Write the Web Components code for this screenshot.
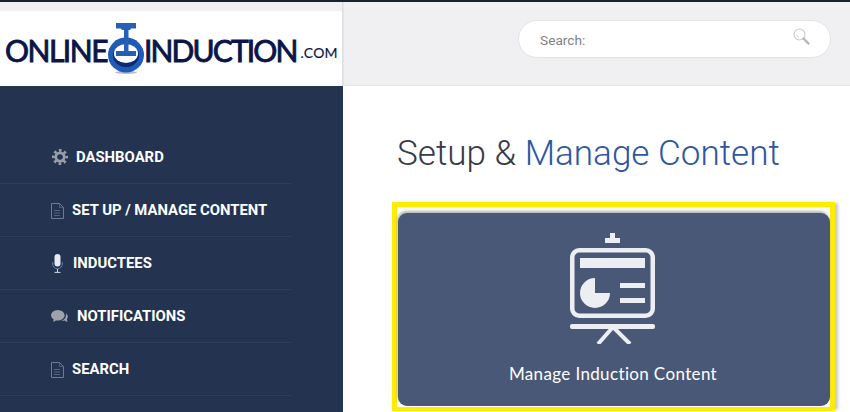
<!DOCTYPE html>
<html><head><meta charset="utf-8"><style>
html,body{margin:0;padding:0;height:412px;overflow:hidden;background:#fff;font-family:Roboto,sans-serif}
</style></head><body>
<oi-app>
<oi-logo slot="logo"></oi-logo>
<oi-search slot="search"></oi-search>
<oi-nav-item slot="nav" icon="gear" gap="8">DASHBOARD</oi-nav-item>
<oi-nav-item slot="nav" icon="doc" gap="8">SET UP / MANAGE CONTENT</oi-nav-item>
<oi-nav-item slot="nav" icon="mic" gap="10">INDUCTEES</oi-nav-item>
<oi-nav-item slot="nav" icon="chat" gap="8">NOTIFICATIONS</oi-nav-item>
<oi-nav-item slot="nav" icon="doc" gap="8">SEARCH</oi-nav-item>
<oi-card slot="main">Manage Induction Content</oi-card>
</oi-app>
<script>
const def=(n,html)=>customElements.define(n,class extends HTMLElement{constructor(){super();this.attachShadow({mode:'open'}).innerHTML=html}});
def('oi-app',`<style>
:host{display:grid;grid-template-columns:343px 1fr;grid-template-rows:2px 84px 326px;width:850px;height:412px;overflow:hidden}
.top{grid-column:1/3;background:#17222e}
.logo{background:#f0f0f2;padding-top:9px;border-right:1px solid #dedee0;box-sizing:border-box;display:flex;flex-direction:column}
.hdr{background:#f0f0f2;border-left:1px solid #e6e6e8;border-bottom:1px solid #e6e6e8;display:flex;justify-content:flex-end;padding:18px 19px 0 0;box-sizing:border-box}
.side{background:#243350;padding-top:45px;box-sizing:border-box}
.side ::slotted(*){width:291px}
.main{padding:43px 15px 0 49px;box-sizing:border-box;display:flex;flex-direction:column}
h1{margin:0 0 25px 5px;font:300 35.1px/48px Roboto,sans-serif;color:#3a3a44;white-space:nowrap}
h1 span{color:#2f56a0}
</style>
<div class="top"></div>
<div class="logo"><slot name="logo"></slot></div>
<div class="hdr"><slot name="search"></slot></div>
<div class="side"><slot name="nav"></slot></div>
<div class="main"><h1>Setup &amp; <span>Manage Content</span></h1><slot name="main"></slot></div>`);
def('oi-logo',`<style>
:host{display:block;background:#fff;height:75px;box-sizing:border-box;padding:0 0 0 5px;flex:none}
.row{display:flex;align-items:center;height:75px;color:#0b1548;font:400 30px/1 "Lato",sans-serif;white-space:nowrap;-webkit-text-stroke:.9px #0b1548}
.a{letter-spacing:-1.5px;margin-top:2px}
.b{letter-spacing:-1.85px}
svg{flex:none;margin:-1px 0 0 1px}
small{font-size:14px;-webkit-text-stroke:.15px #0b1548;margin:9px 0 0 4px;letter-spacing:.2px}
</style><div class="row"><span class="a">ONLINE</span><svg width="36" height="51" viewBox="0 0 36 51"><ellipse cx="18" cy="49.500" rx="11" ry="1.500" fill="#b9bcc6"/><path d="M8 0h20v5.500h-5l-1 1.500h-8l-1-1.500H8z" fill="#2560b6"/><ellipse cx="18" cy="32" rx="18" ry="17.500" fill="#1f5bb8"/><ellipse cx="18" cy="32.500" rx="13" ry="11.500" fill="#0e2b72"/><ellipse cx="18" cy="30.500" rx="12" ry="9.500" fill="#fff"/><rect x="16" y="6" width="4.500" height="24" fill="#2560b6"/><path d="M8 28h20v5H8z" fill="#2560b6"/></svg><span class="a b">INDUCTION</span><small>.COM</small></div>`);
def('oi-search',`<style>
:host{display:flex;align-items:center;justify-content:space-between;width:313px;height:38px;box-sizing:border-box;background:#fff;border:1px solid #e4e4e6;border-radius:19px;padding:2px 20px 0 21px;font:13.7px Roboto,sans-serif;color:#808086}
svg{margin-top:-8px}
</style><span>Search:</span><svg width="17" height="17" viewBox="0 0 17 17"><circle cx="6.500" cy="6.500" r="5.500" fill="none" stroke="#c9cacd" stroke-width="1.100"/><path d="M3.600 7a3 3 0 0 0 2 2.200" fill="none" stroke="#c9cacd" stroke-width=".8"/><path d="M10.500 10.500l5 5" stroke="#b0b1b5" stroke-width="2.200" stroke-linecap="round"/></svg>`);
const icons={
gear:`<svg width="16" height="16" viewBox="0 0 16 16" style="margin-left:1px"><g fill="none" stroke="#9a9ea8"><circle cx="8" cy="8" r="6.600" stroke-width="2.800" stroke-dasharray="2.600 2.584" stroke-dashoffset="1.300"/><circle cx="8" cy="8" r="4.200" stroke-width="2.800"/></g></svg>`,
doc:`<svg width="13" height="16" viewBox="0 0 13 16" style="margin-bottom:-1px"><path d="M.5.500h8l4 4v11H.5z" fill="none" stroke="#717b90" stroke-width="1"/><path d="M8.500.500v4h4" fill="none" stroke="#717b90" stroke-width=".6"/><path d="M3.500 7.500h6M3.500 10h6M3.500 12.500h6" stroke="#8a93a6" stroke-width="1" stroke-dasharray="1 1"/></svg>`,
mic:`<svg width="11" height="19" viewBox="0 0 11 19" style="margin-left:1px"><rect x="2.500" y="0" width="6" height="12.500" rx="3" fill="#e9ebf0"/><path d="M.7 8v2a4.800 4.800 0 0 0 9.600 0V8" fill="none" stroke="#5f86b0" stroke-width="1"/><path d="M5.500 15v3M2.500 18.400h6" stroke="#d5d9e2" stroke-width="1"/></svg>`,
chat:`<svg width="18" height="13" viewBox="0 0 18 13"><ellipse cx="6.800" cy="5.200" rx="6.800" ry="5.200" fill="#a0a3ab"/><path d="M3 8.500L2 12l4-2z" fill="#a0a3ab"/><path d="M15 3.500c2 1.500 2.500 4 .8 5.600l.7 3-3-1.700c-1 .4-2 .4-3 .1 3-.5 5-3.500 4.500-7z" fill="#a0a3ab"/></svg>`};
customElements.define('oi-nav-item',class extends HTMLElement{constructor(){super();const g=this.getAttribute('gap'),ic=icons[this.getAttribute('icon')];
this.attachShadow({mode:'open'}).innerHTML=`<style>
:host{display:flex;align-items:center;height:53px;box-sizing:border-box;border-bottom:1px solid #2f3e5b;padding:0 0 0 51px;font:700 14.85px/20px Roboto,sans-serif;color:#fff;white-space:nowrap}
svg{display:block;flex:none}
</style>${ic}<span style="margin-left:${g}px"><slot></slot></span>`}});
def('oi-card',`<style>
:host{display:flex;box-sizing:border-box;width:443px;height:209px;border:solid #ffec00;border-width:5px 5px 4px 5px;background:#fff;box-shadow:4px 0 3px -1px #c9c9c9;padding:6px 0 1px 1px;flex:none}
.c{flex:1;background:#4a5878;border-radius:9px;box-shadow:-1px -2px 3px #b5b5b5;display:flex;flex-direction:column;align-items:center;color:#fff;font:400 17px/20px Lato,sans-serif}
svg{margin:20px 3px 0 0;display:block}
.t{margin:20px 2px 0 0;letter-spacing:.36px}
</style><div class="c"><svg width="85" height="111" viewBox="0 0 85 111" fill="#eceef3"><path d="M40 0h5v5h5v5H35V5h5z"/><rect x="2.250" y="17.250" width="80.500" height="65.500" rx="7" fill="none" stroke="#eceef3" stroke-width="4.500"/><rect x="10" y="25" width="65" height="10"/><path d="M25 45a15 15 0 1 0 15 15H25z"/><rect x="50" y="50" width="25" height="5"/><rect x="50" y="65" width="25" height="5"/><rect x="0" y="91" width="85" height="5" rx="2"/><path d="M43 94L28 111M43 94l17 17" fill="none" stroke="#eceef3" stroke-width="4"/></svg><div class="t"><slot></slot></div></div>`);
</script></body></html>
